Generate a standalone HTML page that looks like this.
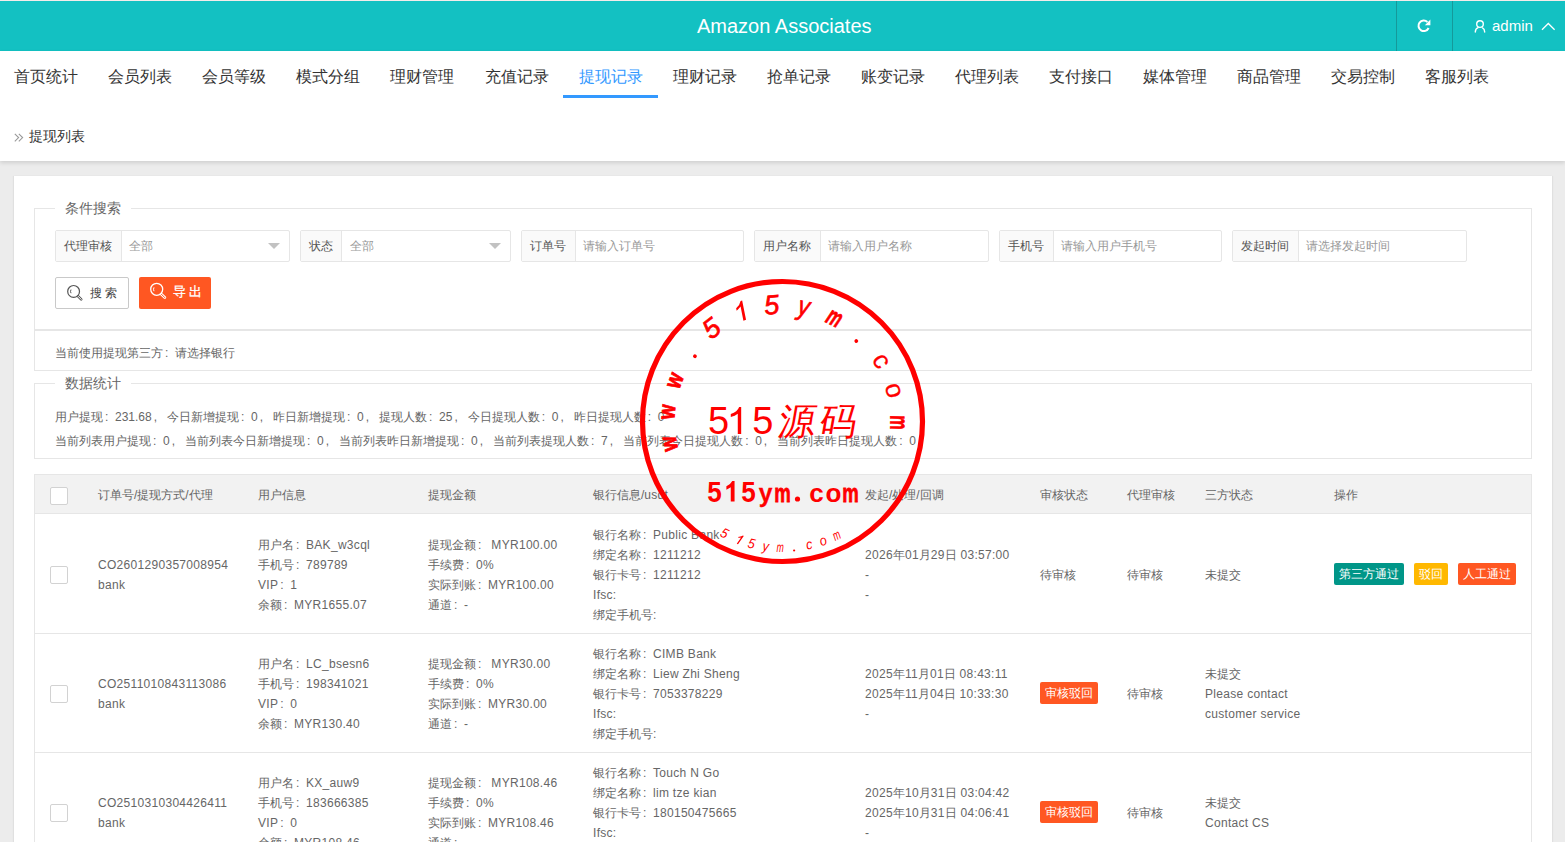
<!DOCTYPE html>
<html><head><meta charset="utf-8">
<style>
*{box-sizing:border-box;margin:0;padding:0}
html,body{width:1565px;height:842px;overflow:hidden}
body{background:#ececec;font-family:"Liberation Sans",sans-serif;color:#666;position:relative}
.abs{position:absolute}
#topline{left:0;top:0;width:1565px;height:1px;background:#f4ecea}
#hdr{left:0;top:1px;width:1565px;height:50px;background:#13c1c2}
#title{left:697px;top:13px;font-size:20px;color:#fff;line-height:24px;white-space:nowrap}
.vdiv{top:0;width:1px;height:50px;background:#15999a}
#navwrap{left:0;top:51px;width:1565px;height:110px;background:#fff;box-shadow:0 2px 4px rgba(0,0,0,.12)}
.nav{top:16px;font-size:16px;color:#333;line-height:20px;white-space:nowrap}
.nav.on{color:#3399ff}
#uline{left:563px;top:44px;width:95px;height:3px;background:#3399ff}
#crumb{left:29px;top:76px;font-size:14px;color:#333;line-height:18px;white-space:nowrap}
#card{left:14px;top:176px;width:1538px;height:700px;background:#fff;box-shadow:-1px 0 1px rgba(0,0,0,.05),1px 0 1px rgba(0,0,0,.05)}
.fs{border:1px solid #e6e6e6}
.legend{background:#fff;padding:0 10px;font-size:14px;color:#666;line-height:16px;white-space:nowrap}
.ig{height:32px;border:1px solid #e6e6e6;border-radius:2px;background:#fff}
.ig .lb{position:absolute;left:0;top:0;height:30px;background:#fafafa;border-right:1px solid #e6e6e6;font-size:12px;color:#555;line-height:30px;padding:0 8px;white-space:nowrap}
.ig .ph{position:absolute;top:0;height:30px;font-size:12px;color:#999;line-height:30px;white-space:nowrap}
.ig .tri{position:absolute;top:12px;width:0;height:0;border-left:6px solid transparent;border-right:6px solid transparent;border-top:6px solid #c2c2c2}
.t12{font-size:12px;line-height:20px;color:#666;white-space:nowrap}
.td{position:absolute;display:flex;align-items:center;padding:2px 15px 0;font-size:12px;line-height:20px;color:#666;white-space:nowrap}
.n{letter-spacing:0.3px}
.fc{display:inline-block;width:12px;padding-left:2px;font-style:normal}
.chk{display:block;width:18px;height:18px;border:1px solid #d2d2d2;border-radius:2px;background:#fff}
.btn{position:relative;top:-1px;display:inline-block;height:22px;line-height:22px;padding:0 5px;font-size:12px;color:#fff;border-radius:2px;margin-right:10px;vertical-align:top}
</style></head><body>
<div id="topline" class="abs"></div>
<div id="hdr" class="abs">
  <div id="title" class="abs">Amazon Associates</div>
  <div class="abs vdiv" style="left:1396px"></div>
  <div class="abs vdiv" style="left:1452px"></div>
  <svg class="abs" style="left:1413px;top:15px" width="20" height="20" viewBox="0 0 20 20"><path d="M15.6 12 A5.3 5.3 0 1 1 14.4 5.9" fill="none" stroke="#fff" stroke-width="2"/><path d="M17.4 3.6 L17.4 9.2 L11.9 9.2 Z" fill="#fff"/></svg>
  <svg class="abs" style="left:1472px;top:16px" width="16" height="18" viewBox="0 0 16 18"><circle cx="8" cy="7.1" r="3.3" fill="none" stroke="#fff" stroke-width="1.4"/><path d="M3.3 15 Q3.4 11.6 6.1 10.6 M12.7 15 Q12.6 11.9 10.5 10.9" fill="none" stroke="#fff" stroke-width="1.4" stroke-linecap="round"/></svg>
  <div class="abs" style="left:1492px;top:15px;font-size:15px;line-height:20px;color:#fff;white-space:nowrap">admin</div>
  <svg class="abs" style="left:1540px;top:19px" width="16" height="12" viewBox="0 0 16 12"><path d="M2 9.8 L8.3 3.5 L14.6 9.8" fill="none" stroke="#fff" stroke-width="1.3"/></svg>
</div>
<div id="navwrap" class="abs">
  <div class="abs nav" style="left:14px">首页统计</div>
  <div class="abs nav" style="left:108px">会员列表</div>
  <div class="abs nav" style="left:202px">会员等级</div>
  <div class="abs nav" style="left:296px">模式分组</div>
  <div class="abs nav" style="left:390px">理财管理</div>
  <div class="abs nav" style="left:485px">充值记录</div>
  <div class="abs nav on" style="left:579px">提现记录</div>
  <div class="abs nav" style="left:673px">理财记录</div>
  <div class="abs nav" style="left:767px">抢单记录</div>
  <div class="abs nav" style="left:861px">账变记录</div>
  <div class="abs nav" style="left:955px">代理列表</div>
  <div class="abs nav" style="left:1049px">支付接口</div>
  <div class="abs nav" style="left:1143px">媒体管理</div>
  <div class="abs nav" style="left:1237px">商品管理</div>
  <div class="abs nav" style="left:1331px">交易控制</div>
  <div class="abs nav" style="left:1425px">客服列表</div>
  <div id="uline" class="abs"></div>
  <svg class="abs" style="left:14px;top:82px" width="10" height="10" viewBox="0 0 10 10"><path d="M0.8 0.8 L4.6 4.6 L0.8 8.4 M4.8 0.8 L8.6 4.6 L4.8 8.4" fill="none" stroke="#999" stroke-width="1.1"/></svg>
  <div id="crumb" class="abs">提现列表</div>
</div>
<div id="card" class="abs"></div>

<!-- search fieldset -->
<div class="abs fs" style="left:34px;top:208px;width:1498px;height:122px;border-bottom:none"></div>
<div class="abs legend" style="left:55px;top:200px">条件搜索</div>

<div class="abs ig" style="left:55px;top:230px;width:235px"><div class="lb" style="width:66px">代理审核</div><div class="ph" style="left:73px">全部</div><div class="tri" style="left:212px"></div></div>
<div class="abs ig" style="left:300px;top:230px;width:211px"><div class="lb" style="width:41px">状态</div><div class="ph" style="left:49px">全部</div><div class="tri" style="left:188px"></div></div>
<div class="abs ig" style="left:521px;top:230px;width:223px"><div class="lb" style="width:54px">订单号</div><div class="ph" style="left:61px">请输入订单号</div></div>
<div class="abs ig" style="left:754px;top:230px;width:235px"><div class="lb" style="width:66px">用户名称</div><div class="ph" style="left:73px">请输入用户名称</div></div>
<div class="abs ig" style="left:999px;top:230px;width:223px"><div class="lb" style="width:54px">手机号</div><div class="ph" style="left:61px">请输入用户手机号</div></div>
<div class="abs ig" style="left:1232px;top:230px;width:235px"><div class="lb" style="width:66px">发起时间</div><div class="ph" style="left:73px">请选择发起时间</div></div>

<div class="abs" style="left:55px;top:277px;width:74px;height:32px;border:1px solid #c9c9c9;border-radius:2px;background:#fff"></div>
<svg class="abs" style="left:64px;top:282px" width="22" height="22" viewBox="0 0 22 22"><circle cx="9.6" cy="9.4" r="5.9" fill="none" stroke="#555" stroke-width="1.2"/><path d="M7 7.6 Q6 9.4 7 11.2" fill="none" stroke="#555" stroke-width="1"/><path d="M14.2 14.4 L17.2 17.4" stroke="#555" stroke-width="2.6" stroke-linecap="round"/><path d="M14.2 14.4 L17.2 17.4" stroke="#fff" stroke-width="1" stroke-linecap="round"/></svg>
<div class="abs" style="left:90px;top:283px;font-size:12px;line-height:20px;color:#444;white-space:nowrap">搜&nbsp;索</div>
<div class="abs" style="left:139px;top:277px;width:72px;height:32px;border-radius:2px;background:#ff5722"></div>
<svg class="abs" style="left:147px;top:280px" width="22" height="22" viewBox="0 0 22 22"><circle cx="9.7" cy="9.3" r="6" fill="none" stroke="#fff" stroke-width="1.3"/><path d="M7 7.4 Q6 9.3 7 11.2" fill="none" stroke="#fff" stroke-width="1"/><path d="M14.4 14.2 L17.8 17.6" stroke="#fff" stroke-width="2.8" stroke-linecap="round"/><path d="M14.4 14.2 L17.8 17.6" stroke="#ff5722" stroke-width="1" stroke-linecap="round"/></svg>
<div class="abs" style="left:173px;top:282px;font-size:13px;line-height:20px;color:#fff;letter-spacing:3px;white-space:nowrap;-webkit-text-stroke:0.3px #fff">导出</div>

<!-- third party box -->
<div class="abs fs" style="left:34px;top:329px;width:1498px;height:42px;border-top:2px solid #e6e6e6"></div>
<div class="abs t12" style="left:55px;top:343px">当前使用提现第三方<i class="fc">:</i>请选择银行</div>

<!-- stats fieldset -->
<div class="abs fs" style="left:34px;top:383px;width:1498px;height:76px"></div>
<div class="abs legend" style="left:55px;top:375px">数据统计</div>
<div class="abs t12" style="left:55px;top:407px">用户提现<i class="fc">:</i>231.68<i class="fc">,</i> 今日新增提现<i class="fc">:</i>0<i class="fc">,</i> 昨日新增提现<i class="fc">:</i>0<i class="fc">,</i> 提现人数<i class="fc">:</i>25<i class="fc">,</i> 今日提现人数<i class="fc">:</i>0<i class="fc">,</i> 昨日提现人数<i class="fc">:</i>0</div>
<div class="abs t12" style="left:55px;top:431px">当前列表用户提现<i class="fc">:</i>0<i class="fc">,</i> 当前列表今日新增提现<i class="fc">:</i>0<i class="fc">,</i> 当前列表昨日新增提现<i class="fc">:</i>0<i class="fc">,</i> 当前列表提现人数<i class="fc">:</i>7<i class="fc">,</i> 当前列表今日提现人数<i class="fc">:</i>0<i class="fc">,</i> 当前列表昨日提现人数<i class="fc">:</i>0</div>

<div class="abs" style="left:34px;top:474px;width:1498px;height:400px;border:1px solid #e6e6e6;border-bottom:none"></div>
<div class="abs" style="left:35px;top:475px;width:1496px;height:39px;background:#f2f2f2;border-bottom:1px solid #e6e6e6"></div>
<div class="td" style="left:35px;top:475px;width:48px;height:39px"><div><span class="chk"></span></div></div>
<div class="td" style="left:83px;top:475px;width:160px;height:39px;padding-top:0"><div>订单号/提现方式/代理</div></div>
<div class="td" style="left:243px;top:475px;width:170px;height:39px;padding-top:0"><div>用户信息</div></div>
<div class="td" style="left:413px;top:475px;width:165px;height:39px;padding-top:0"><div>提现金额</div></div>
<div class="td" style="left:578px;top:475px;width:272px;height:39px;padding-top:0"><div>银行信息/<span class="n">usdt</span></div></div>
<div class="td" style="left:850px;top:475px;width:175px;height:39px;padding-top:0"><div>发起/处理/回调</div></div>
<div class="td" style="left:1025px;top:475px;width:87px;height:39px;padding-top:0"><div>审核状态</div></div>
<div class="td" style="left:1112px;top:475px;width:78px;height:39px;padding-top:0"><div>代理审核</div></div>
<div class="td" style="left:1190px;top:475px;width:129px;height:39px;padding-top:0"><div>三方状态</div></div>
<div class="td" style="left:1319px;top:475px;width:212px;height:39px;padding-top:0"><div>操作</div></div>
<div class="abs" style="left:35px;top:633px;width:1496px;height:1px;background:#e6e6e6"></div>
<div class="td" style="left:35px;top:515px;width:48px;height:118px"><div><span class="chk"></span></div></div>
<div class="td" style="left:83px;top:515px;width:160px;height:118px"><div><span class="n">CO2601290357008954</span><br><span class="n">bank</span></div></div>
<div class="td" style="left:243px;top:515px;width:170px;height:118px"><div>用户名<i class="fc">:</i><span class="n">BAK_w3cql</span><br>手机号<i class="fc">:</i><span class="n">789789</span><br><span class="n">VIP</span><i class="fc">:</i><span class="n">1</span><br>余额<i class="fc">:</i><span class="n">MYR1655.07</span></div></div>
<div class="td" style="left:413px;top:515px;width:165px;height:118px"><div>提现金额<i class="fc">:</i>&nbsp;<span class="n">MYR100.00</span><br>手续费<i class="fc">:</i><span class="n">0%</span><br>实际到账<i class="fc">:</i><span class="n">MYR100.00</span><br>通道<i class="fc">:</i>-</div></div>
<div class="td" style="left:578px;top:515px;width:272px;height:118px"><div>银行名称<i class="fc">:</i><span class="n">Public Bank</span><br>绑定名称<i class="fc">:</i><span class="n">1211212</span><br>银行卡号<i class="fc">:</i><span class="n">1211212</span><br><span class="n">Ifsc:</span><br>绑定手机号:</div></div>
<div class="td" style="left:850px;top:515px;width:175px;height:118px"><div><span class="n">2026</span>年<span class="n">01</span>月<span class="n">29</span>日<span class="n"> 03:57:00</span><br>-<br>-</div></div>
<div class="td" style="left:1025px;top:515px;width:87px;height:118px"><div>待审核</div></div>
<div class="td" style="left:1112px;top:515px;width:78px;height:118px"><div>待审核</div></div>
<div class="td" style="left:1190px;top:515px;width:129px;height:118px"><div>未提交</div></div>
<div class="td" style="left:1319px;top:515px;width:212px;height:118px"><div><span class="btn" style="background:#009688">第三方通过</span><span class="btn" style="background:#ffb800">驳回</span><span class="btn" style="background:#ff5722">人工通过</span></div></div>
<div class="abs" style="left:35px;top:752px;width:1496px;height:1px;background:#e6e6e6"></div>
<div class="td" style="left:35px;top:634px;width:48px;height:118px"><div><span class="chk"></span></div></div>
<div class="td" style="left:83px;top:634px;width:160px;height:118px"><div><span class="n">CO2511010843113086</span><br><span class="n">bank</span></div></div>
<div class="td" style="left:243px;top:634px;width:170px;height:118px"><div>用户名<i class="fc">:</i><span class="n">LC_bsesn6</span><br>手机号<i class="fc">:</i><span class="n">198341021</span><br><span class="n">VIP</span><i class="fc">:</i><span class="n">0</span><br>余额<i class="fc">:</i><span class="n">MYR130.40</span></div></div>
<div class="td" style="left:413px;top:634px;width:165px;height:118px"><div>提现金额<i class="fc">:</i>&nbsp;<span class="n">MYR30.00</span><br>手续费<i class="fc">:</i><span class="n">0%</span><br>实际到账<i class="fc">:</i><span class="n">MYR30.00</span><br>通道<i class="fc">:</i>-</div></div>
<div class="td" style="left:578px;top:634px;width:272px;height:118px"><div>银行名称<i class="fc">:</i><span class="n">CIMB Bank</span><br>绑定名称<i class="fc">:</i><span class="n">Liew Zhi Sheng</span><br>银行卡号<i class="fc">:</i><span class="n">7053378229</span><br><span class="n">Ifsc:</span><br>绑定手机号:</div></div>
<div class="td" style="left:850px;top:634px;width:175px;height:118px"><div><span class="n">2025</span>年<span class="n">11</span>月<span class="n">01</span>日<span class="n"> 08:43:11</span><br><span class="n">2025</span>年<span class="n">11</span>月<span class="n">04</span>日<span class="n"> 10:33:30</span><br>-</div></div>
<div class="td" style="left:1025px;top:634px;width:87px;height:118px"><div><span class="btn" style="background:#ff5722;margin:0">审核驳回</span></div></div>
<div class="td" style="left:1112px;top:634px;width:78px;height:118px"><div>待审核</div></div>
<div class="td" style="left:1190px;top:634px;width:129px;height:118px"><div>未提交<br><span class="n">Please contact</span><br><span class="n">customer service</span></div></div>
<div class="td" style="left:1319px;top:634px;width:212px;height:118px"><div></div></div>
<div class="abs" style="left:35px;top:871px;width:1496px;height:1px;background:#e6e6e6"></div>
<div class="td" style="left:35px;top:753px;width:48px;height:118px"><div><span class="chk"></span></div></div>
<div class="td" style="left:83px;top:753px;width:160px;height:118px"><div><span class="n">CO2510310304426411</span><br><span class="n">bank</span></div></div>
<div class="td" style="left:243px;top:753px;width:170px;height:118px"><div>用户名<i class="fc">:</i><span class="n">KX_auw9</span><br>手机号<i class="fc">:</i><span class="n">183666385</span><br><span class="n">VIP</span><i class="fc">:</i><span class="n">0</span><br>余额<i class="fc">:</i><span class="n">MYR108.46</span></div></div>
<div class="td" style="left:413px;top:753px;width:165px;height:118px"><div>提现金额<i class="fc">:</i>&nbsp;<span class="n">MYR108.46</span><br>手续费<i class="fc">:</i><span class="n">0%</span><br>实际到账<i class="fc">:</i><span class="n">MYR108.46</span><br>通道<i class="fc">:</i>-</div></div>
<div class="td" style="left:578px;top:753px;width:272px;height:118px"><div>银行名称<i class="fc">:</i><span class="n">Touch N Go</span><br>绑定名称<i class="fc">:</i><span class="n">lim tze kian</span><br>银行卡号<i class="fc">:</i><span class="n">180150475665</span><br><span class="n">Ifsc:</span><br>绑定手机号:</div></div>
<div class="td" style="left:850px;top:753px;width:175px;height:118px"><div><span class="n">2025</span>年<span class="n">10</span>月<span class="n">31</span>日<span class="n"> 03:04:42</span><br><span class="n">2025</span>年<span class="n">10</span>月<span class="n">31</span>日<span class="n"> 04:06:41</span><br>-</div></div>
<div class="td" style="left:1025px;top:753px;width:87px;height:118px"><div><span class="btn" style="background:#ff5722;margin:0">审核驳回</span></div></div>
<div class="td" style="left:1112px;top:753px;width:78px;height:118px"><div>待审核</div></div>
<div class="td" style="left:1190px;top:753px;width:129px;height:118px"><div>未提交<br><span class="n">Contact CS</span></div></div>
<div class="td" style="left:1319px;top:753px;width:212px;height:118px"><div></div></div>

<!--STAMP-->
<svg class="abs" style="left:0;top:0" width="1565" height="842" viewBox="0 0 1565 842">
<circle cx="782.5" cy="421.5" r="140" fill="none" stroke="#ff0000" stroke-width="5.2"/>
<g transform="rotate(258.80 782.5 421.5) translate(782.5 313.5) scale(0.78 1)"><text x="0" y="0" text-anchor="middle" font-family="Liberation Sans" font-weight="bold" font-size="24" fill="#ff0000" stroke="#ff0000" stroke-width="0.9">w</text></g>
<g transform="rotate(274.77 782.5 421.5) translate(782.5 313.5) scale(0.78 1)"><text x="0" y="0" text-anchor="middle" font-family="Liberation Sans" font-weight="bold" font-size="24" fill="#ff0000" stroke="#ff0000" stroke-width="0.9">w</text></g>
<g transform="rotate(290.74 782.5 421.5) translate(782.5 313.5) scale(0.78 1)"><text x="0" y="0" text-anchor="middle" font-family="Liberation Sans" font-weight="bold" font-size="24" fill="#ff0000" stroke="#ff0000" stroke-width="0.9">w</text></g>
<g transform="rotate(306.71 782.5 421.5)"><circle cx="782.5" cy="312.3" r="1.9" fill="#ff0000"/></g>
<g transform="rotate(322.68 782.5 421.5) translate(782.5 313.5) scale(1.0 1)"><text x="0" y="0" text-anchor="middle" font-family="Liberation Sans" font-weight="normal" font-style="italic" font-size="27" fill="#ff0000" stroke="#ff0000" stroke-width="0.7">5</text></g>
<g transform="rotate(338.65 782.5 421.5) translate(782.5 313.5) skewX(-10)"><path d="M3.06 0 L3.06 -19.4 L1.38 -19.4 Q-0.02 -15.91 -4.48 -14.36 L-4.48 -11.84 Q-1.98 -12.72 0.26 -14.27 L0.26 0 Z" fill="#ff0000"/></g>
<g transform="rotate(354.62 782.5 421.5) translate(782.5 313.5) scale(1.0 1)"><text x="0" y="0" text-anchor="middle" font-family="Liberation Sans" font-weight="normal" font-style="italic" font-size="27" fill="#ff0000" stroke="#ff0000" stroke-width="0.7">5</text></g>
<g transform="rotate(370.59 782.5 421.5) translate(782.5 313.5) scale(0.85 1)"><text x="0" y="0" text-anchor="middle" font-family="Liberation Sans" font-weight="normal" font-style="italic" font-size="27" fill="#ff0000" stroke="#ff0000" stroke-width="0.7">y</text></g>
<g transform="rotate(386.56 782.5 421.5) translate(782.5 313.5) scale(0.62 1)"><text x="0" y="0" text-anchor="middle" font-family="Liberation Sans" font-weight="bold" font-style="italic" font-size="26" fill="#ff0000" stroke="#ff0000" stroke-width="0.8">m</text></g>
<g transform="rotate(402.53 782.5 421.5)"><circle cx="782.5" cy="312.3" r="1.9" fill="#ff0000"/></g>
<g transform="rotate(418.50 782.5 421.5) translate(782.5 313.5) scale(1.0 1)"><text x="0" y="0" text-anchor="middle" font-family="Liberation Sans" font-weight="normal" font-size="26" fill="#ff0000" stroke="#ff0000" stroke-width="0.3">c</text></g>
<g transform="rotate(434.47 782.5 421.5) translate(782.5 313.5) scale(1.0 1)"><text x="0" y="0" text-anchor="middle" font-family="Liberation Sans" font-weight="normal" font-size="26" fill="#ff0000" stroke="#ff0000" stroke-width="0.3">o</text></g>
<g transform="rotate(450.44 782.5 421.5) translate(782.5 313.5) scale(0.62 1)"><text x="0" y="0" text-anchor="middle" font-family="Liberation Sans" font-weight="bold" font-size="26" fill="#ff0000" stroke="#ff0000" stroke-width="0.8">m</text></g>
<g transform="rotate(27.50 782.5 421.5) translate(782.5 552.0) scale(0.9 1)"><text x="0" y="0" text-anchor="middle" font-family="Liberation Sans" font-style="italic" font-size="14" fill="#ff0000">5</text></g>
<g transform="rotate(20.80 782.5 421.5) translate(783.0 552.0) skewX(-14)"><path d="M1.46 0 L1.46 -9.8 L0.68 -9.8 Q0.03 -8.04 -2.33 -7.25 L-2.33 -6.08 Q-0.88 -6.54 0.16 -7.32 L0.16 0 Z" fill="#ff0000"/></g>
<g transform="rotate(14.20 782.5 421.5) translate(782.5 552.0) scale(0.9 1)"><text x="0" y="0" text-anchor="middle" font-family="Liberation Sans" font-style="italic" font-size="14" fill="#ff0000">5</text></g>
<g transform="rotate(7.60 782.5 421.5) translate(782.5 552.0) scale(0.9 1)"><text x="0" y="0" text-anchor="middle" font-family="Liberation Sans" font-style="italic" font-size="14" fill="#ff0000">y</text></g>
<g transform="rotate(1.00 782.5 421.5) translate(782.5 552.0) scale(0.62 1)"><text x="0" y="0" text-anchor="middle" font-family="Liberation Sans" font-style="italic" font-size="14" fill="#ff0000">m</text></g>
<g transform="rotate(-5.60 782.5 421.5)"><circle cx="781.5" cy="551.0" r="1.1" fill="#ff0000"/></g>
<g transform="rotate(-12.20 782.5 421.5) translate(782.5 552.0) scale(0.9 1)"><text x="0" y="0" text-anchor="middle" font-family="Liberation Sans" font-style="italic" font-size="14" fill="#ff0000">c</text></g>
<g transform="rotate(-18.80 782.5 421.5) translate(782.5 552.0) scale(0.9 1)"><text x="0" y="0" text-anchor="middle" font-family="Liberation Sans" font-style="italic" font-size="14" fill="#ff0000">o</text></g>
<g transform="rotate(-25.40 782.5 421.5) translate(782.5 552.0) scale(0.62 1)"><text x="0" y="0" text-anchor="middle" font-family="Liberation Sans" font-style="italic" font-size="14" fill="#ff0000">m</text></g>
<text x="718.6" y="434" text-anchor="middle" font-family="Liberation Sans" font-size="38" fill="#ff0000">5</text>
<path d="M741.18 434 L741.18 407 L739.14 407 Q737.44 411.86 730.78 414.02 L730.78 417.08 Q735.06 415.80 737.78 413.64 L737.78 434 Z" fill="#ff0000"/>
<text x="762.7" y="434" text-anchor="middle" font-family="Liberation Sans" font-size="38" fill="#ff0000">5</text>
<g transform="translate(795 434) skewX(-10)"><text x="0" y="0" text-anchor="middle" font-family="Liberation Sans" font-size="37" fill="#ff0000">源</text></g>
<g transform="translate(836.5 434) skewX(-10)"><text x="0" y="0" text-anchor="middle" font-family="Liberation Sans" font-size="37" fill="#ff0000">码</text></g>
<g transform="translate(714.5 501.5) scale(0.9 1.0)"><text x="0" y="0" text-anchor="middle" font-family="Liberation Sans" font-weight="bold" font-size="29" fill="#ff0000">5</text></g>
<path d="M734.56 501.5 L734.56 480.9 L732.28 480.9 Q730.38 484.61 726.38 486.26 L726.38 489.68 Q727.72 488.82 730.76 487.17 L730.76 501.5 Z" fill="#ff0000"/>
<g transform="translate(748.5 501.5) scale(0.9 1.0)"><text x="0" y="0" text-anchor="middle" font-family="Liberation Sans" font-weight="bold" font-size="29" fill="#ff0000">5</text></g>
<g transform="translate(765.5 501.5) scale(0.85 0.88)"><text x="0" y="0" text-anchor="middle" font-family="Liberation Sans" font-weight="bold" font-size="29" fill="#ff0000" stroke="#ff0000" stroke-width="0.3">y</text></g>
<g transform="translate(782.5 501.5) scale(0.64 0.88)"><text x="0" y="0" text-anchor="middle" font-family="Liberation Sans" font-weight="bold" font-size="29" fill="#ff0000" stroke="#ff0000" stroke-width="0.9">m</text></g>
<circle cx="797.5" cy="499" r="2.6" fill="#ff0000"/>
<g transform="translate(816.5 501.5) scale(0.9 0.88)"><text x="0" y="0" text-anchor="middle" font-family="Liberation Sans" font-weight="bold" font-size="29" fill="#ff0000">c</text></g>
<g transform="translate(833.5 501.5) scale(0.9 0.88)"><text x="0" y="0" text-anchor="middle" font-family="Liberation Sans" font-weight="bold" font-size="29" fill="#ff0000">o</text></g>
<g transform="translate(850.5 501.5) scale(0.64 0.88)"><text x="0" y="0" text-anchor="middle" font-family="Liberation Sans" font-weight="bold" font-size="29" fill="#ff0000" stroke="#ff0000" stroke-width="0.9">m</text></g>
</svg>
<!--/STAMP-->
</body></html>
